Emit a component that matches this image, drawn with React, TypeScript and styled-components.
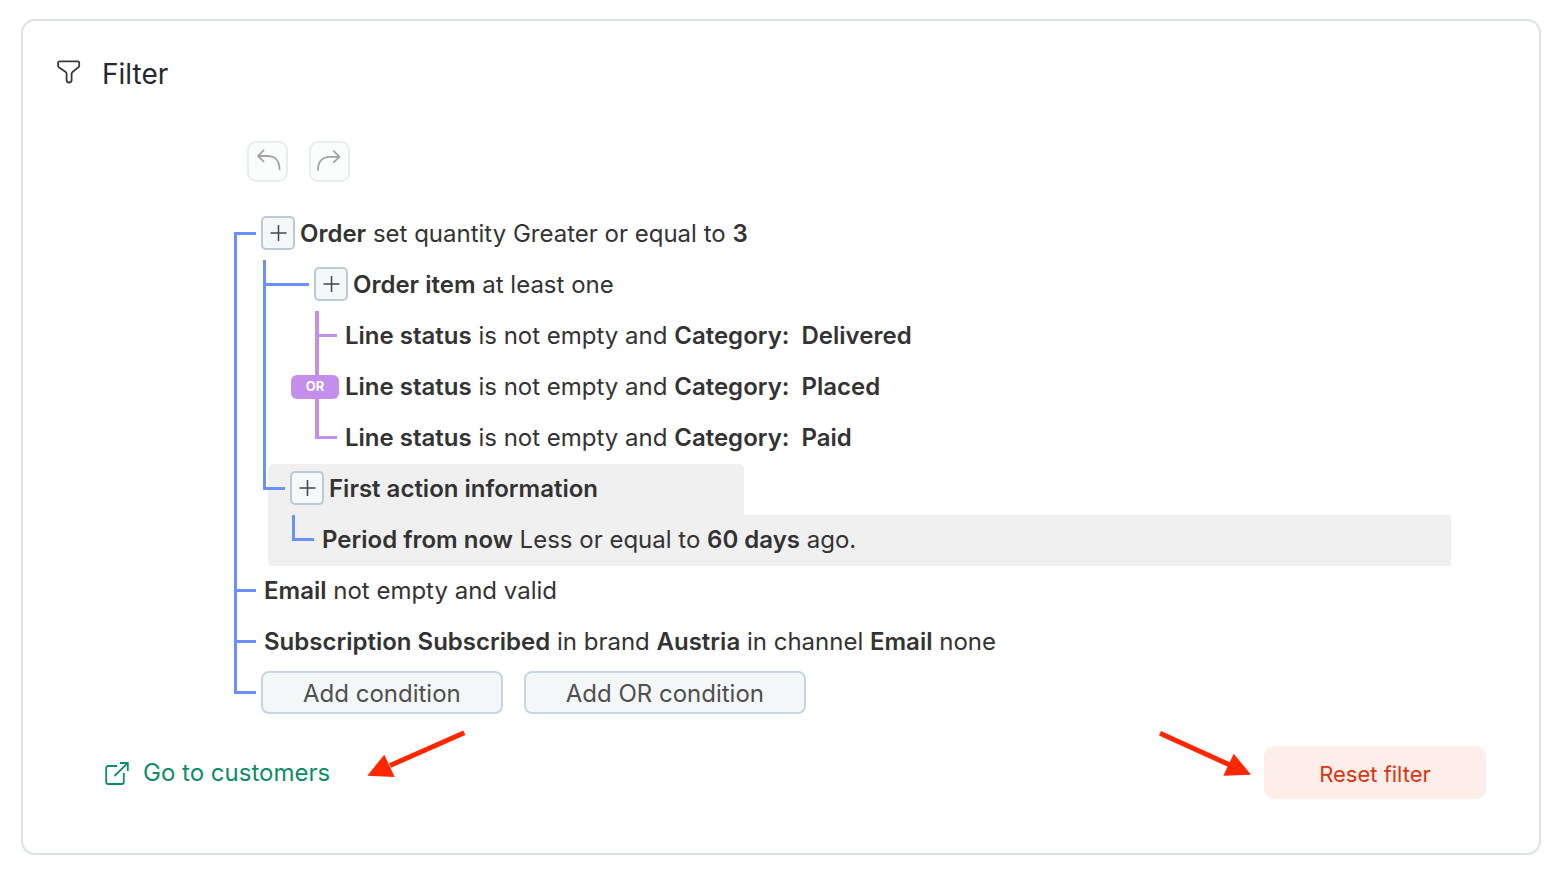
import React from "react";
import styled, { createGlobalStyle, css } from "styled-components";

const BLUE = "#6b90fa";
const PURPLE = "#c48eec";
const HIGHLIGHT = "#f0f0f0";

const GlobalStyle = createGlobalStyle`
  *, *::before, *::after { box-sizing: border-box; }
  body {
    margin: 0;
    background: #fff;
    color: #333;
    font-family: Inter, "Liberation Sans", sans-serif;
    font-size: 24px;
    line-height: 32px;
  }
  button { font: inherit; cursor: pointer; }
`;

const Page = styled.main`
  padding: 19px 25px 17px 21px;
`;

const Card = styled.section`
  border: 2px solid #dae4e8;
  border-radius: 14px;
  background: #fff;
  padding: 34px 53px 54px 34px;
`;

const Header = styled.header`
  display: flex;
  align-items: center;
  gap: 21px;
`;

const FilterIcon = styled.svg`
  width: 24px;
  height: 24px;
  margin-bottom: 4px;
`;

const Title = styled.h1`
  margin: 0;
  padding-top: 1px;
  font-size: 28px;
  line-height: 36px;
  font-weight: 400;
  color: #28282d;
`;

const Toolbar = styled.div`
  display: flex;
  gap: 21px;
  margin: 49px 0 27px 190px;
`;

const HistoryButton = styled.button`
  width: 41px;
  height: 41px;
  padding: 0;
  display: grid;
  place-items: center;
  border: 2px solid #e8eef0;
  border-radius: 9px;
  background: #fbfdfd;
  color: #a3a3a3;

  svg { width: 37px; height: 37px; display: block; }
`;

const Tree = styled.div`
  margin: 0 35px 0 177px;
`;

const Branch = styled.ul`
  list-style: none;
  margin: 0;
  padding: 0;
`;

const NodeItem = styled.li`
  display: flex;
`;

const Rail = styled.div<{ $wide?: boolean }>`
  position: relative;
  z-index: 1;
  flex: none;
  width: ${(p) => (p.$wide ? 46 : 22)}px;
  display: flex;
  flex-direction: column;
`;

type LineProps = { $color: string; $weight: number; $shown: boolean };

const RailTop = styled.div<LineProps>`
  height: 23px;
  border-left: ${(p) => p.$weight}px solid ${(p) => (p.$shown ? p.$color : "transparent")};
`;

const Tick = styled.div<{ $color: string }>`
  height: 3px;
  background: ${(p) => p.$color};
`;

const RailBottom = styled.div<LineProps>`
  flex: 1;
  border-left: ${(p) => p.$weight}px solid ${(p) => (p.$shown ? p.$color : "transparent")};
`;

const OrBadge = styled.span`
  position: absolute;
  top: 13px;
  left: -24px;
  width: 48px;
  height: 24px;
  border-radius: 6px;
  background: ${PURPLE};
  color: #fff;
  font-size: 13px;
  line-height: 23px;
  font-weight: 700;
  text-align: center;
`;

const Body = styled.div<{ $highlight?: boolean }>`
  flex: 1;
  min-width: 0;
  padding-left: 5px;
  ${(p) => p.$highlight && css`
    margin-left: -17px;
    padding-left: 0;
  `}
`;

const Row = styled.div<{ $highlight?: boolean }>`
  display: flex;
  align-items: center;
  gap: 4px;
  min-height: 51px;
  padding-bottom: 3px;
  ${(p) => p.$highlight && css`
    max-width: 476px;
    padding-left: 22px;
    border-radius: 5px 5px 0 0;
    background: ${HIGHLIGHT};
  `}
`;

const Children = styled.div<{ $inset: number; $highlight?: boolean }>`
  padding-left: ${(p) => p.$inset}px;
  ${(p) => p.$highlight && css`
    border-radius: 0 0 0 5px;
    background: ${HIGHLIGHT};
  `}
`;

const Label = styled.p<{ $leaf: boolean }>`
  margin: 0;
  padding: 2px 0 0 ${(p) => (p.$leaf ? 3 : 1)}px;
  white-space: pre-wrap;

  strong { font-weight: 600; }
`;

const PlusButton = styled.button`
  flex: none;
  width: 34px;
  height: 34px;
  padding: 0;
  border: 2px solid #bccbd3;
  border-radius: 5px;
  background: #f4f8f9;
  color: #444;

  svg { width: 30px; height: 30px; display: block; }
`;

const Actions = styled.div`
  display: flex;
  gap: 21px;
  min-height: 51px;
  padding: 3px 0 5px;
`;

const AddButton = styled.button`
  padding: 2px 40px 0;
  border: 2px solid #c6d6e1;
  border-radius: 8px;
  background: #f4f7f8;
  color: #4f4f4f;
`;

const Footer = styled.footer`
  display: flex;
  align-items: flex-end;
  min-height: 67px;
  margin-top: 13px;
  padding-left: 48px;
`;

const CustomersLink = styled.a`
  display: flex;
  align-items: center;
  gap: 14px;
  height: 53px;
  color: #0b8d67;
  text-decoration: none;

  svg { width: 24px; height: 24px; }
`;

const Arrow = styled.svg`
  flex: none;
  width: 100px;
  height: 48px;
  align-self: flex-start;
  overflow: visible;
  fill: #ff2600;
  stroke: #ff2600;
`;

const LeftArrow = styled(Arrow)`
  margin: 0 auto 0 36px;
`;

const RightArrow = styled(Arrow)`
  margin-right: 8px;
`;

const ResetButton = styled.button`
  width: 222px;
  height: 53px;
  padding: 2px 0 0;
  border: 0;
  border-radius: 10px;
  background: #feeeea;
  color: #db3510;
  font-size: 22px;
`;

function AddChild({ label }: { label: string }) {
  return (
    <PlusButton type="button" aria-label={label}>
      <svg viewBox="0 0 30 30" fill="none" stroke="currentColor" strokeWidth="1.5" aria-hidden="true">
        <path d="M15.500 7v16M7.500 15h16" />
      </svg>
    </PlusButton>
  );
}

type NodeProps = {
  label?: React.ReactNode;
  addLabel?: string;
  first?: boolean;
  last?: boolean;
  wide?: boolean;
  or?: boolean;
  badge?: boolean;
  highlight?: boolean;
  inset?: number;
  content?: React.ReactNode;
  children?: React.ReactNode;
};

function TreeNode({ label, addLabel, first, last, wide, or, badge, highlight, inset = 2, content, children }: NodeProps) {
  const color = or ? PURPLE : BLUE;
  const weight = or ? 4 : 3;
  return (
    <NodeItem>
      <Rail $wide={wide}>
        <RailTop $color={color} $weight={weight} $shown={!first} />
        <Tick $color={color} />
        <RailBottom $color={color} $weight={weight} $shown={!last} />
        {badge && <OrBadge>OR</OrBadge>}
      </Rail>
      <Body $highlight={highlight}>
        {content ?? (
          <Row $highlight={highlight}>
            {addLabel && <AddChild label={addLabel} />}
            <Label $leaf={!addLabel}>{label}</Label>
          </Row>
        )}
        {children && (
          <Children $inset={inset} $highlight={highlight}>
            <Branch>{children}</Branch>
          </Children>
        )}
      </Body>
    </NodeItem>
  );
}

function LineStatus({ category }: { category: string }) {
  return (
    <>
      <strong>Line status</strong> is not empty and <strong>Category:{"  "}{category}</strong>
    </>
  );
}

export default function App() {
  return (
    <>
      <GlobalStyle />
      <Page>
        <Card aria-labelledby="filter-title">
          <Header>
            <FilterIcon viewBox="0 0 24 24" fill="none" stroke="#38383d" strokeWidth="1.8" strokeLinejoin="round" aria-hidden="true">
              <path d="M2.6 1.4h18c1 0 1.6.6 1.6 1.6v2.400c0 .9-.3 1.500-1 2l-5.400 4.300c-.8.7-1.200 1.300-1.200 2.300v6c0 1.600-1.200 2.500-2.600 2.500-1.400 0-2.400-.9-2.400-2.500v-6c0-1-.4-1.600-1.200-2.300L2.100 7.400c-.7-.5-1-1.100-1-2V3c0-1 .5-1.600 1.500-1.600z" />
            </FilterIcon>
            <Title id="filter-title">Filter</Title>
          </Header>

          <Toolbar>
            <HistoryButton type="button" aria-label="Undo">
              <svg viewBox="0 0 37 37" fill="none" stroke="currentColor" strokeWidth="1.8" strokeLinecap="round" strokeLinejoin="round" aria-hidden="true">
                <path d="M14.500 7.300 9 13l5.500 5.300M9.300 13h9.200c7.500 0 12 4.500 12 13.300" />
              </svg>
            </HistoryButton>
            <HistoryButton type="button" aria-label="Redo">
              <svg viewBox="0 0 37 37" fill="none" stroke="currentColor" strokeWidth="1.8" strokeLinecap="round" strokeLinejoin="round" aria-hidden="true">
                <path d="M22.800 8.200 28.500 13.800l-5.700 5.400M28.200 13.800h-9.200c-7.500 0-12 4.500-12 13.300" />
              </svg>
            </HistoryButton>
          </Toolbar>

          <Tree>
            <Branch>
              <TreeNode
                first
                addLabel="Add to Order"
                label={<><strong>Order</strong> set quantity Greater or equal to <strong>3</strong></>}
              >
                <TreeNode
                  wide
                  inset={1}
                  addLabel="Add to Order item"
                  label={<><strong>Order item</strong> at least one</>}
                >
                  <TreeNode or label={<LineStatus category="Delivered" />} />
                  <TreeNode or badge label={<LineStatus category="Placed" />} />
                  <TreeNode or last label={<LineStatus category="Paid" />} />
                </TreeNode>
                <TreeNode
                  last
                  highlight
                  inset={24}
                  addLabel="Add to First action information"
                  label={<strong>First action information</strong>}
                >
                  <TreeNode last label={<><strong>Period from now</strong> Less or equal to <strong>60 days</strong> ago.</>} />
                </TreeNode>
              </TreeNode>
              <TreeNode label={<><strong>Email</strong> not empty and valid</>} />
              <TreeNode
                label={
                  <>
                    <strong>Subscription Subscribed</strong> in brand <strong>Austria</strong> in channel{" "}
                    <strong>Email</strong> none
                  </>
                }
              />
              <TreeNode
                last
                content={
                  <Actions>
                    <AddButton type="button">Add condition</AddButton>
                    <AddButton type="button">Add OR condition</AddButton>
                  </Actions>
                }
              />
            </Branch>
          </Tree>

          <Footer>
            <CustomersLink href="#customers">
              <svg viewBox="0 0 24 24" fill="none" stroke="currentColor" strokeWidth="1.8" aria-hidden="true">
                <path d="M12 5H3.200C2 5 1.200 5.800 1.200 7v14c0 1.200.8 2 2 2h13.600c1.200 0 2-.8 2-2V12" />
                <path d="M15 2h7.800v8M22.600 2.200 9.500 15" />
              </svg>
              Go to customers
            </CustomersLink>
            <LeftArrow viewBox="0 0 100 48" aria-hidden="true">
              <path d="M98.300.8 24 33.500" strokeWidth="5" />
              <path d="M1.300 43.700 18.300 22.700l10.400 22.300z" stroke="none" />
            </LeftArrow>
            <RightArrow viewBox="0 0 100 48" aria-hidden="true">
              <path d="M4 1.300 74 33" strokeWidth="5" />
              <path d="M95 42.700 77.700 21.700l-10.400 22z" stroke="none" />
            </RightArrow>
            <ResetButton type="button">Reset filter</ResetButton>
          </Footer>
        </Card>
      </Page>
    </>
  );
}
